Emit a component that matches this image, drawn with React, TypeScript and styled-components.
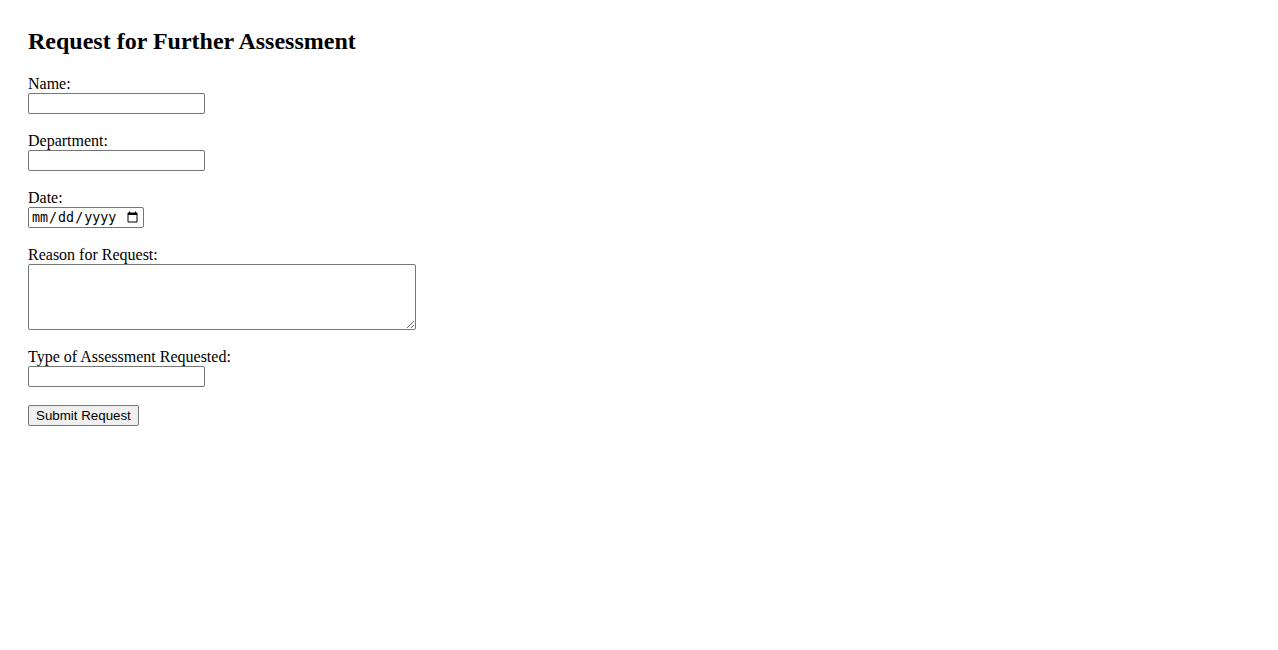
import styled, { createGlobalStyle } from 'styled-components';

const GlobalStyle = createGlobalStyle`
  body {
    margin: 0;
    background: #ffffff;
    color: #000000;
    font-family: "Liberation Serif", "Times New Roman", serif;
  }
`;

const Page = styled.div`
  padding: 28px;
`;

const Title = styled.h2`
  margin: 0 0 20px;
  font-size: 24px;
  line-height: 27px;
  font-weight: bold;
`;

const Form = styled.form`
  display: flex;
  flex-direction: column;
  align-items: flex-start;
`;

const Group = styled.div`
  display: flex;
  flex-direction: column;
  align-items: flex-start;
  margin-bottom: 18px;
`;

const Label = styled.label`
  display: block;
  font-size: 16px;
  line-height: 18px;
`;

const TextInput = styled.input<{ $width?: number }>`
  box-sizing: border-box;
  width: ${(p) => p.$width ?? 177}px;
  height: 21px;
  padding: 1px 2px;
  border: 1px solid #767676;
  border-radius: 2px;
  background: #ffffff;
  font-family: "Liberation Sans", Arial, sans-serif;
  font-size: 13.33px;
`;

const DateInput = styled(TextInput)`
  font-family: "DejaVu Sans Mono", "Liberation Mono", monospace;
  font-size: 13.33px;
  padding: 1px 2px;
`;

const TextArea = styled.textarea`
  box-sizing: border-box;
  width: 388px;
  height: 66px;
  padding: 2px;
  border: 1px solid #767676;
  border-radius: 2px;
  font-family: "Liberation Mono", monospace;
  font-size: 13.33px;
`;

const SubmitButton = styled.button`
  box-sizing: border-box;
  height: 21px;
  padding: 1px 7px;
  border: 1px solid #767676;
  border-radius: 2px;
  background: #efefef;
  color: #000000;
  font-family: "Liberation Sans", Arial, sans-serif;
  font-size: 13.33px;
  line-height: 17px;
`;

export default function App() {
  return (
    <Page>
      <GlobalStyle />
      <Title>Request for Further Assessment</Title>
      <Form onSubmit={(e) => e.preventDefault()}>
        <Group>
          <Label htmlFor="name">Name:</Label>
          <TextInput id="name" type="text" />
        </Group>
        <Group>
          <Label htmlFor="department">Department:</Label>
          <TextInput id="department" type="text" />
        </Group>
        <Group>
          <Label htmlFor="date">Date:</Label>
          <DateInput id="date" type="date" $width={116} />
        </Group>
        <Group>
          <Label htmlFor="reason">Reason for Request:</Label>
          <TextArea id="reason" rows={4} cols={50} />
        </Group>
        <Group>
          <Label htmlFor="type">Type of Assessment Requested:</Label>
          <TextInput id="type" type="text" />
        </Group>
        <SubmitButton type="submit">Submit Request</SubmitButton>
      </Form>
    </Page>
  );
}
